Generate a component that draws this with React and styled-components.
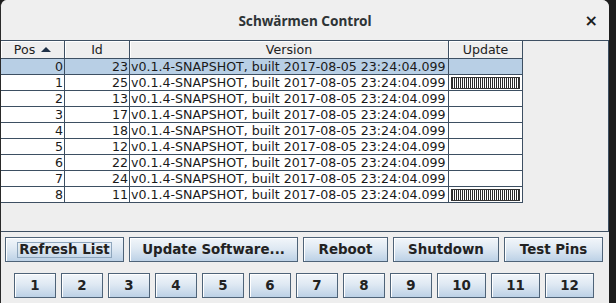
import React from "react";
import styled, { createGlobalStyle } from "styled-components";

const GlobalStyle = createGlobalStyle`
  html, body {
    margin: 0;
    padding: 0;
    background: #1d1d1d;
    width: 616px;
    height: 303px;
    overflow: hidden;
  }
`;

const Window = styled.div`
  width: 609px;
  height: 303px;
  box-sizing: border-box;
  background: #eeeeee;
  border-left: 1px solid #2a2a2a;
  border-radius: 7px 7px 0 0;
  display: flex;
  flex-direction: column;
  overflow: hidden;
  font-family: "DejaVu Sans", sans-serif;
`;

const TitleBar = styled.div`
  height: 40px;
  flex: none;
  display: grid;
  grid-template-columns: 1fr auto 1fr;
  align-items: center;
  background: #efefef;
`;

const Title = styled.div`
  grid-column: 2;
  font-family: "Noto Sans", "DejaVu Sans", sans-serif;
  font-weight: 700;
  font-size: 13.6px;
  color: #2e3436;
`;

const Close = styled.div`
  grid-column: 3;
  justify-self: end;
  margin-right: 11px;
  font-family: "DejaVu Sans", sans-serif;
  font-weight: 700;
  font-size: 16px;
  color: #1c1c1c;
`;

const ScrollPane = styled.div`
  height: 192px;
  flex: none;
  box-sizing: border-box;
  border: 1px solid #3d4f62;
  border-left-width: 0;
  background: #eeeeee;
`;

const Grid = styled.div`
  width: 522px;
`;

const Row = styled.div`
  display: grid;
  grid-template-columns: 64px 65px 319px 74px;
  height: ${(p) => (p.$head ? 18 : 16)}px;
  background: ${(p) => (p.$head ? "#eeeeee" : p.$sel ? "#b8cfe5" : "#ffffff")};
`;

const HeadCell = styled.div`
  box-sizing: border-box;
  border-right: 1px solid #3d4f62;
  border-bottom: 1px solid #3d4f62;
  box-shadow: inset 1px 1px 0 #ffffff;
  font-size: 12.6px;
  line-height: 17px;
  color: #222;
  text-align: center;
  white-space: nowrap;
`;

const Arrow = styled.span`
  display: inline-block;
  margin-left: 6px;
  width: 0;
  height: 0;
  border-left: 5px solid transparent;
  border-right: 5px solid transparent;
  border-bottom: 5px solid #1f3147;
  vertical-align: 2px;
`;

const Cell = styled.div`
  box-sizing: border-box;
  border-right: 1px solid #3d4f62;
  border-bottom: 1px solid #3d4f62;
  font-size: 12.6px;
  line-height: 15px;
  color: #1a1a1a;
  padding: 0 1px;
  white-space: nowrap;
  overflow: hidden;
  display: flex;
  align-items: center;
  justify-content: ${(p) => (p.$align === "right" ? "flex-end" : "flex-start")};
`;

const Progress = styled.div`
  flex: 1;
  height: 12px;
  margin: 0 1px;
  box-sizing: border-box;
  border: 1px solid #333;
  background: repeating-linear-gradient(
    90deg,
    #2a2a2a 0px,
    #2a2a2a 1px,
    #ffffff 1px,
    #ffffff 2px
  );
`;

const ButtonArea = styled.div`
  display: flex;
  flex-direction: column;
  gap: 11px;
  padding-top: 5px;
`;

const ButtonRow = styled.div`
  display: flex;
  justify-content: center;
  gap: ${(p) => p.$gap || 5}px;
  padding-right: 2px;
`;

const Button = styled.button`
  width: ${(p) => p.$w}px;
  height: 25px;
  box-sizing: border-box;
  padding: 0;
  margin: 0;
  border: 1px solid #4e6378;
  border-radius: 0;
  box-shadow: inset 1px 1px 0 #ffffff;
  background: linear-gradient(180deg, #f2f6fa 0%, #dfe9f3 45%, #bcd1e6 100%);
  font-family: "DejaVu Sans", sans-serif;
  font-weight: 700;
  font-size: 13.4px;
  color: #222;
  display: flex;
  align-items: center;
  justify-content: center;
`;

const Focus = styled.span`
  border: 1px solid #8ea6bd;
  padding: 0 1px;
  line-height: 14px;
`;

const rows = [
  { pos: 0, id: 23, sel: true },
  { pos: 1, id: 25, bar: true },
  { pos: 2, id: 13 },
  { pos: 3, id: 17 },
  { pos: 4, id: 18 },
  { pos: 5, id: 12 },
  { pos: 6, id: 22 },
  { pos: 7, id: 24 },
  { pos: 8, id: 11, bar: true },
];

const version = "v0.1.4-SNAPSHOT, built 2017-08-05 23:24:04.099";

const actions = [
  { label: "Refresh List", w: 119, focus: true },
  { label: "Update Software...", w: 169 },
  { label: "Reboot", w: 85 },
  { label: "Shutdown", w: 106 },
  { label: "Test Pins", w: 99 },
];

const pins = [1, 2, 3, 4, 5, 6, 7, 8, 9, 10, 11, 12];

export default function App() {
  return (
    <>
      <GlobalStyle />
      <Window>
        <TitleBar>
          <Title>Schwärmen Control</Title>
          <Close>×</Close>
        </TitleBar>
        <ScrollPane>
          <Grid>
            <Row $head>
              <HeadCell>
                Pos
                <Arrow />
              </HeadCell>
              <HeadCell>Id</HeadCell>
              <HeadCell>Version</HeadCell>
              <HeadCell>Update</HeadCell>
            </Row>
            {rows.map((r) => (
              <Row key={r.pos} $sel={r.sel}>
                <Cell $align="right">{r.pos}</Cell>
                <Cell $align="right">{r.id}</Cell>
                <Cell>{version}</Cell>
                <Cell>{r.bar && <Progress />}</Cell>
              </Row>
            ))}
          </Grid>
        </ScrollPane>
        <ButtonArea>
          <ButtonRow>
            {actions.map((a) => (
              <Button key={a.label} $w={a.w}>
                {a.focus ? <Focus>{a.label}</Focus> : a.label}
              </Button>
            ))}
          </ButtonRow>
          <ButtonRow>
            {pins.map((n) => (
              <Button key={n} $w={n > 9 ? 49 : 42}>
                {n}
              </Button>
            ))}
          </ButtonRow>
        </ButtonArea>
      </Window>
    </>
  );
}
